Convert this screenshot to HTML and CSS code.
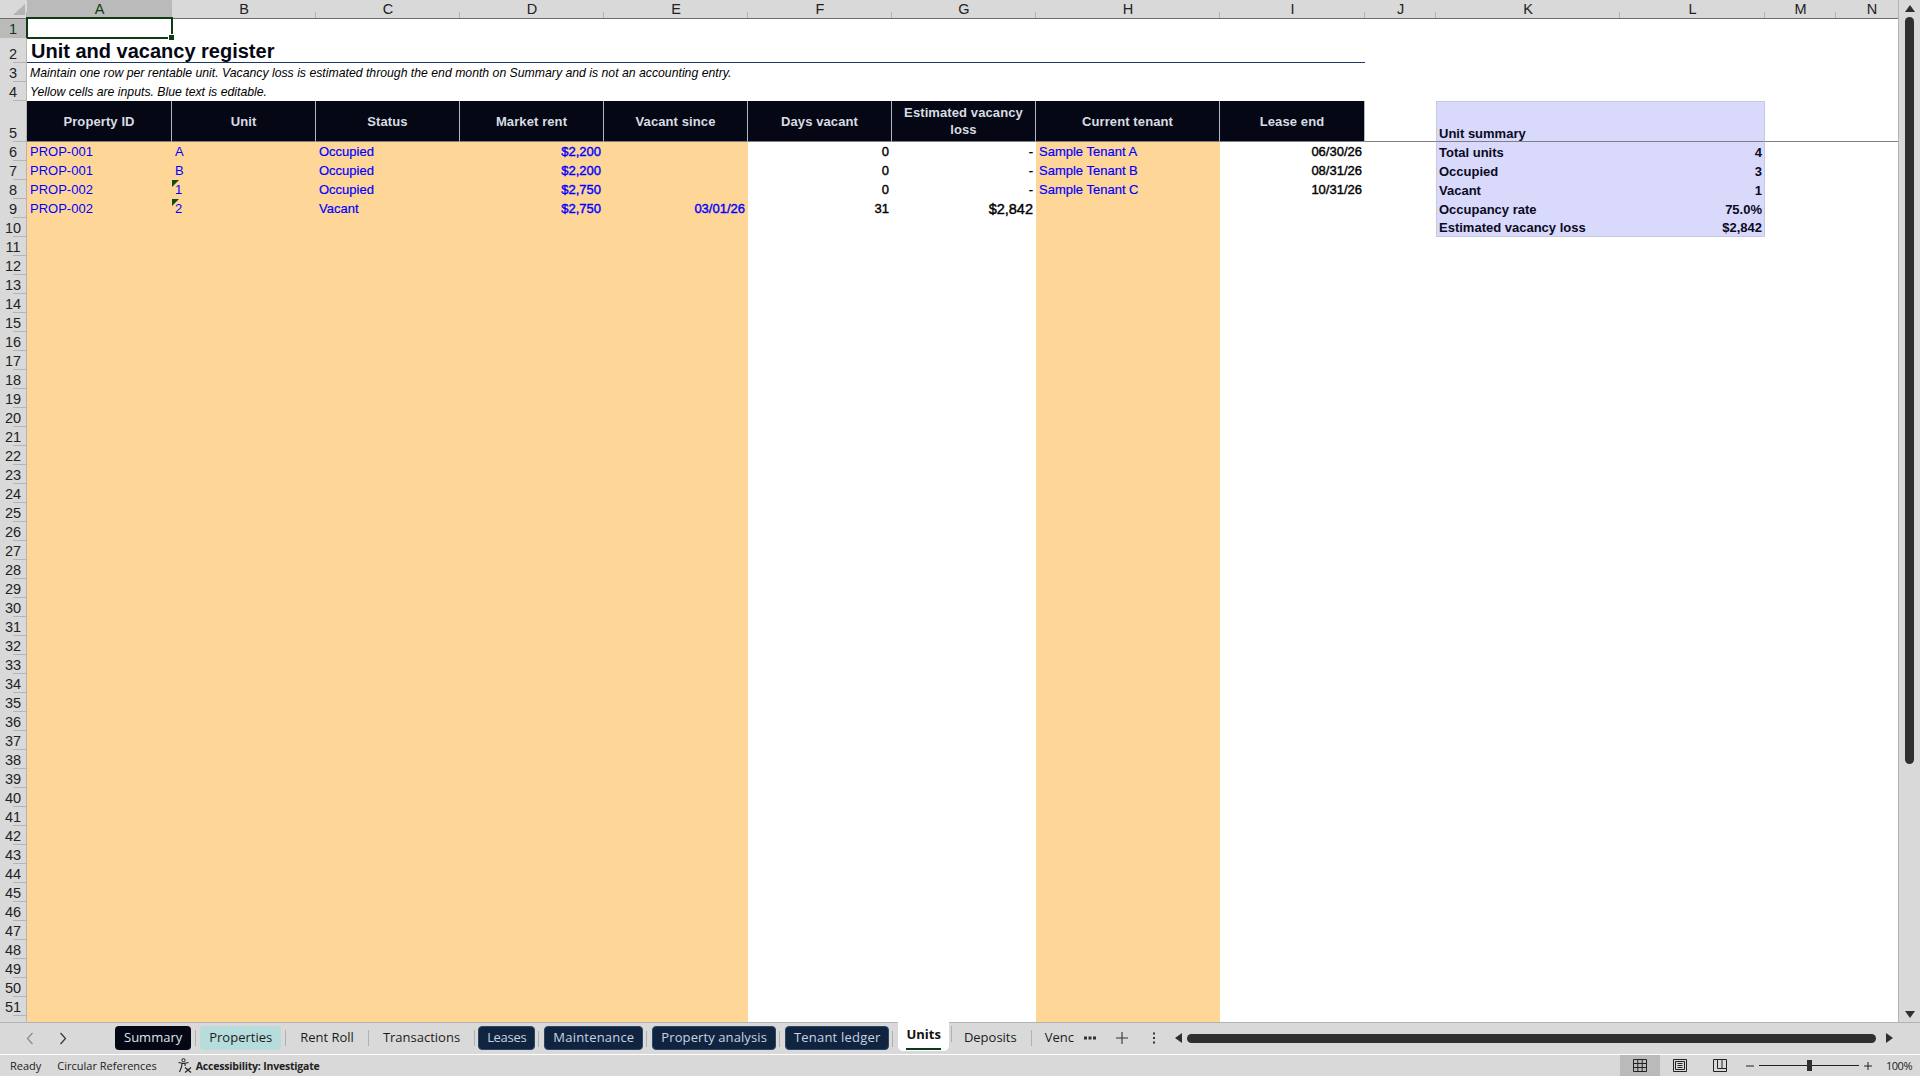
FILE: index.html
```html
<!DOCTYPE html>
<html lang="en">

<head>
    <meta charset="UTF-8">
    <title>Unit and vacancy register</title>
    <link rel="stylesheet" href="styles.css">
</head>

<body>
    <div class="workspace">
        <div class="sheet">
            <table class="grid">
                <colgroup>
                    <col class="c-rowhead">
                    <col class="c-a"><col class="c-std"><col class="c-std"><col class="c-std"><col class="c-std"><col class="c-std"><col class="c-std">
                    <col class="c-h"><col class="c-i"><col class="c-j"><col class="c-k"><col class="c-l"><col class="c-m"><col class="c-n">
                </colgroup>
                <tr class="letters">
                    <th class="corner"><svg width="12" height="11" viewBox="0 0 12 11"><path d="M12 0V11H0Z" fill="#b4b4b4"/></svg></th>
                    <th class="picked">A</th><th>B</th><th>C</th><th>D</th><th>E</th><th>F</th><th>G</th><th>H</th><th>I</th><th>J</th><th>K</th><th>L</th><th>M</th><th>N</th>
                </tr>
                <tr><th class="num picked">1</th><td class="active"><span class="cursor"></span></td><td colspan="13"></td></tr>
                <tr class="title-row"><th class="num">2</th><td class="title" colspan="9">Unit and vacancy register</td><td colspan="5"></td></tr>
                <tr><th class="num">3</th><td class="note" colspan="9">Maintain one row per rentable unit. Vacancy loss is estimated through the end month on Summary and is not an accounting entry.</td><td colspan="5"></td></tr>
                <tr><th class="num">4</th><td class="note" colspan="9">Yellow cells are inputs. Blue text is editable.</td><td colspan="5"></td></tr>
                <tr class="head-row">
                    <th class="num">5</th>
                    <td class="head">Property ID</td><td class="head">Unit</td><td class="head">Status</td><td class="head">Market rent</td><td class="head">Vacant since</td><td class="head">Days vacant</td><td class="head">Estimated vacancy loss</td><td class="head">Current tenant</td><td class="head">Lease end</td>
                    <td></td><td class="sum sum-top" colspan="2">Unit summary</td><td></td><td></td>
                </tr>
                <tr>
                    <th class="num">6</th>
                    <td class="input">PROP-001</td><td class="input">A</td><td class="input semi">Occupied</td><td class="input right strong">$2,200</td><td class="input right"></td>
                    <td class="right strong">0</td><td class="right strong">-</td><td class="input semi">Sample Tenant A</td><td class="right strong">06/30/26</td>
                    <td></td><td class="sum sum-l">Total units</td><td class="sum sum-r right">4</td><td colspan="2"></td>
                </tr>
                <tr>
                    <th class="num">7</th>
                    <td class="input">PROP-001</td><td class="input">B</td><td class="input semi">Occupied</td><td class="input right strong">$2,200</td><td class="input right"></td>
                    <td class="right strong">0</td><td class="right strong">-</td><td class="input semi">Sample Tenant B</td><td class="right strong">08/31/26</td>
                    <td></td><td class="sum sum-l">Occupied</td><td class="sum sum-r right">3</td><td colspan="2"></td>
                </tr>
                <tr>
                    <th class="num">8</th>
                    <td class="input">PROP-002</td><td class="input flagged">1</td><td class="input semi">Occupied</td><td class="input right strong">$2,750</td><td class="input right"></td>
                    <td class="right strong">0</td><td class="right strong">-</td><td class="input semi">Sample Tenant C</td><td class="right strong">10/31/26</td>
                    <td></td><td class="sum sum-l">Vacant</td><td class="sum sum-r right">1</td><td colspan="2"></td>
                </tr>
                <tr>
                    <th class="num">9</th>
                    <td class="input">PROP-002</td><td class="input flagged">2</td><td class="input semi">Vacant</td><td class="input right strong">$2,750</td><td class="input right strong">03/01/26</td>
                    <td class="right strong">31</td><td class="right strong big">$2,842</td><td class="input"></td><td></td>
                    <td></td><td class="sum sum-l">Occupancy rate</td><td class="sum sum-r right">75.0%</td><td colspan="2"></td>
                </tr>
                <tr>
                    <th class="num">10</th><td class="input" colspan="5"></td><td colspan="2"></td><td class="input"></td><td colspan="2"></td>
                    <td class="sum sum-l sum-end">Estimated vacancy loss</td><td class="sum sum-r sum-end right">$2,842</td><td colspan="2"></td>
                </tr>
                <tr><th class="num">11</th><td class="input" colspan="5"></td><td colspan="2"></td><td class="input"></td><td colspan="6"></td></tr>
                <tr><th class="num">12</th><td class="input" colspan="5"></td><td colspan="2"></td><td class="input"></td><td colspan="6"></td></tr>
                <tr><th class="num">13</th><td class="input" colspan="5"></td><td colspan="2"></td><td class="input"></td><td colspan="6"></td></tr>
                <tr><th class="num">14</th><td class="input" colspan="5"></td><td colspan="2"></td><td class="input"></td><td colspan="6"></td></tr>
                <tr><th class="num">15</th><td class="input" colspan="5"></td><td colspan="2"></td><td class="input"></td><td colspan="6"></td></tr>
                <tr><th class="num">16</th><td class="input" colspan="5"></td><td colspan="2"></td><td class="input"></td><td colspan="6"></td></tr>
                <tr><th class="num">17</th><td class="input" colspan="5"></td><td colspan="2"></td><td class="input"></td><td colspan="6"></td></tr>
                <tr><th class="num">18</th><td class="input" colspan="5"></td><td colspan="2"></td><td class="input"></td><td colspan="6"></td></tr>
                <tr><th class="num">19</th><td class="input" colspan="5"></td><td colspan="2"></td><td class="input"></td><td colspan="6"></td></tr>
                <tr><th class="num">20</th><td class="input" colspan="5"></td><td colspan="2"></td><td class="input"></td><td colspan="6"></td></tr>
                <tr><th class="num">21</th><td class="input" colspan="5"></td><td colspan="2"></td><td class="input"></td><td colspan="6"></td></tr>
                <tr><th class="num">22</th><td class="input" colspan="5"></td><td colspan="2"></td><td class="input"></td><td colspan="6"></td></tr>
                <tr><th class="num">23</th><td class="input" colspan="5"></td><td colspan="2"></td><td class="input"></td><td colspan="6"></td></tr>
                <tr><th class="num">24</th><td class="input" colspan="5"></td><td colspan="2"></td><td class="input"></td><td colspan="6"></td></tr>
                <tr><th class="num">25</th><td class="input" colspan="5"></td><td colspan="2"></td><td class="input"></td><td colspan="6"></td></tr>
                <tr><th class="num">26</th><td class="input" colspan="5"></td><td colspan="2"></td><td class="input"></td><td colspan="6"></td></tr>
                <tr><th class="num">27</th><td class="input" colspan="5"></td><td colspan="2"></td><td class="input"></td><td colspan="6"></td></tr>
                <tr><th class="num">28</th><td class="input" colspan="5"></td><td colspan="2"></td><td class="input"></td><td colspan="6"></td></tr>
                <tr><th class="num">29</th><td class="input" colspan="5"></td><td colspan="2"></td><td class="input"></td><td colspan="6"></td></tr>
                <tr><th class="num">30</th><td class="input" colspan="5"></td><td colspan="2"></td><td class="input"></td><td colspan="6"></td></tr>
                <tr><th class="num">31</th><td class="input" colspan="5"></td><td colspan="2"></td><td class="input"></td><td colspan="6"></td></tr>
                <tr><th class="num">32</th><td class="input" colspan="5"></td><td colspan="2"></td><td class="input"></td><td colspan="6"></td></tr>
                <tr><th class="num">33</th><td class="input" colspan="5"></td><td colspan="2"></td><td class="input"></td><td colspan="6"></td></tr>
                <tr><th class="num">34</th><td class="input" colspan="5"></td><td colspan="2"></td><td class="input"></td><td colspan="6"></td></tr>
                <tr><th class="num">35</th><td class="input" colspan="5"></td><td colspan="2"></td><td class="input"></td><td colspan="6"></td></tr>
                <tr><th class="num">36</th><td class="input" colspan="5"></td><td colspan="2"></td><td class="input"></td><td colspan="6"></td></tr>
                <tr><th class="num">37</th><td class="input" colspan="5"></td><td colspan="2"></td><td class="input"></td><td colspan="6"></td></tr>
                <tr><th class="num">38</th><td class="input" colspan="5"></td><td colspan="2"></td><td class="input"></td><td colspan="6"></td></tr>
                <tr><th class="num">39</th><td class="input" colspan="5"></td><td colspan="2"></td><td class="input"></td><td colspan="6"></td></tr>
                <tr><th class="num">40</th><td class="input" colspan="5"></td><td colspan="2"></td><td class="input"></td><td colspan="6"></td></tr>
                <tr><th class="num">41</th><td class="input" colspan="5"></td><td colspan="2"></td><td class="input"></td><td colspan="6"></td></tr>
                <tr><th class="num">42</th><td class="input" colspan="5"></td><td colspan="2"></td><td class="input"></td><td colspan="6"></td></tr>
                <tr><th class="num">43</th><td class="input" colspan="5"></td><td colspan="2"></td><td class="input"></td><td colspan="6"></td></tr>
                <tr><th class="num">44</th><td class="input" colspan="5"></td><td colspan="2"></td><td class="input"></td><td colspan="6"></td></tr>
                <tr><th class="num">45</th><td class="input" colspan="5"></td><td colspan="2"></td><td class="input"></td><td colspan="6"></td></tr>
                <tr><th class="num">46</th><td class="input" colspan="5"></td><td colspan="2"></td><td class="input"></td><td colspan="6"></td></tr>
                <tr><th class="num">47</th><td class="input" colspan="5"></td><td colspan="2"></td><td class="input"></td><td colspan="6"></td></tr>
                <tr><th class="num">48</th><td class="input" colspan="5"></td><td colspan="2"></td><td class="input"></td><td colspan="6"></td></tr>
                <tr><th class="num">49</th><td class="input" colspan="5"></td><td colspan="2"></td><td class="input"></td><td colspan="6"></td></tr>
                <tr><th class="num">50</th><td class="input" colspan="5"></td><td colspan="2"></td><td class="input"></td><td colspan="6"></td></tr>
                <tr><th class="num">51</th><td class="input" colspan="5"></td><td colspan="2"></td><td class="input"></td><td colspan="6"></td></tr>
                <tr class="last-row"><th class="num"></th><td class="input" colspan="5"></td><td colspan="2"></td><td class="input"></td><td colspan="6"></td></tr>
            </table>
        </div>
        <div class="vscroll">
            <svg class="arrow" width="10" height="7" viewBox="0 0 10 7"><path d="M5 0L10 7H0Z" fill="#2f2f2f"/></svg>
            <div class="vthumb"></div>
            <svg class="arrow arrow-end" width="10" height="7" viewBox="0 0 10 7"><path d="M0 0H10L5 7Z" fill="#2f2f2f"/></svg>
        </div>
    </div>

    <div class="tabbar">
        <div class="tab-nav">
            <svg width="8" height="13" viewBox="0 0 8 13"><path d="M6.5 1L1.5 6.5L6.5 12" fill="none" stroke="#8a8a8a" stroke-width="1.2"/></svg>
            <svg width="8" height="13" viewBox="0 0 8 13"><path d="M1.5 1L6.5 6.5L1.5 12" fill="none" stroke="#333" stroke-width="1.2"/></svg>
        </div>
        <div class="tabs">
            <div class="tab tab-black">Summary</div>
            <div class="tab tab-teal">Properties</div>
            <div class="tab tab-plain">Rent Roll</div>
            <div class="tab tab-plain tab-tight-end">Transactions</div>
            <div class="tab tab-navy tab-narrow">Leases</div>
            <div class="tab tab-navy tab-wide">Maintenance</div>
            <div class="tab tab-navy tab-spaced">Property analysis</div>
            <div class="tab tab-navy tab-wide">Tenant ledger</div>
            <div class="tab tab-current"><span class="tab-label">Units</span></div>
            <div class="tab tab-plain">Deposits</div>
            <div class="tab tab-cut">Venc</div>
        </div>
        <div class="tab-tools">
            <svg class="more" width="12" height="4" viewBox="0 0 12 4"><path d="M0 0.5H3V3.5H0ZM4.5 0.5H7.5V3.5H4.5ZM9 0.5H12V3.5H9Z" fill="#333"/></svg>
            <svg class="plus" width="12" height="12" viewBox="0 0 12 12"><path d="M6 0V12M0 6H12" stroke="#333" stroke-width="1.1"/></svg>
            <svg class="dots" width="4" height="12" viewBox="0 0 4 12"><path d="M1 0.5H3V2.5H1ZM1 5H3V7H1ZM1 9.5H3V11.5H1Z" fill="#333"/></svg>
        </div>
        <div class="hscroll">
            <svg width="7" height="10" viewBox="0 0 7 10"><path d="M7 0V10L0 5Z" fill="#2f2f2f"/></svg>
            <div class="hthumb"></div>
            <svg class="hend" width="7" height="10" viewBox="0 0 7 10"><path d="M0 0V10L7 5Z" fill="#2f2f2f"/></svg>
        </div>
    </div>

    <div class="statusbar">
        <span class="status-item">Ready</span>
        <span class="status-item">Circular References</span>
        <span class="status-a11y">
            <svg width="15" height="15" viewBox="0 0 15 15">
                <circle cx="6.5" cy="2.2" r="1.6" fill="none" stroke="#222"/>
                <path d="M1.5 4.5L6.5 5.5L11.5 4.5M5 5.5L4.5 9L2.5 14M8 5.5L8.2 8" fill="none" stroke="#222" stroke-width="1.1"/>
                <path d="M8 9.5L14 14.5M14 9.5L8 14.5" fill="none" stroke="#222" stroke-width="1.2"/>
            </svg>
            Accessibility: Investigate
        </span>
        <div class="status-right">
            <div class="views">
                <div class="view view-on">
                    <svg width="14" height="13" viewBox="0 0 14 13"><path d="M0.5 0.5H13.5V12.5H0.5ZM0.5 4.5H13.5M0.5 8.5H13.5M4.8 0.5V12.5M9.2 0.5V12.5" fill="none" stroke="#222"/></svg>
                </div>
                <div class="view">
                    <svg width="14" height="13" viewBox="0 0 14 13"><path d="M0.5 0.5H13.5V12.5H0.5ZM2.5 2.5H11.5V10.5H2.5ZM4.5 4.5H9.5M4.5 6.5H9.5M4.5 8.5H9.5" fill="none" stroke="#222"/></svg>
                </div>
                <div class="view">
                    <svg width="14" height="13" viewBox="0 0 14 13"><path d="M0.5 0.5H13.5V12.5H0.5ZM4.5 0.5V9.5H13.5M9 0.5V9.5" fill="none" stroke="#222"/></svg>
                </div>
            </div>
            <div class="zoom">
                <svg width="8" height="8" viewBox="0 0 8 8"><path d="M0 4H8" stroke="#222"/></svg>
                <div class="slider"><span class="slider-knob"></span></div>
                <svg width="8" height="8" viewBox="0 0 8 8"><path d="M0 4H8M4 0V8" stroke="#222"/></svg>
            </div>
            <span class="zoom-value">100%</span>
        </div>
    </div>
</body>

</html>
```

FILE: styles.css
```css
html,
body {
    margin: 0;
    padding: 0;
    height: 100%;
    overflow: hidden;
}

body {
    display: flex;
    flex-direction: column;
    width: 1920px;
    height: 1076px;
    font-family: "Liberation Sans", Arial, sans-serif;
    background-color: #d9d9d9;
    color: #111;
}

.workspace {
    display: flex;
    height: 1022px;
    flex-shrink: 0;
}

.sheet {
    width: 1898px;
    overflow: hidden;
    background-color: white;
}

.vscroll {
    flex: 1;
    display: flex;
    flex-direction: column;
    align-items: center;
    padding-top: 5px;
    border-left: 1px solid #b4b4b4;
}

.vthumb {
    width: 9px;
    height: 747px;
    margin-top: 5px;
    background-color: #2f2f2f;
    border-radius: 5px;
}

.arrow-end {
    margin-top: auto;
    margin-bottom: 4px;
}

/* the grid itself, column N runs on past the scrollbar */
.grid {
    table-layout: fixed;
    width: 1908px;
    border-spacing: 0;
    border-collapse: separate;
    font-size: 13px;
}

.c-rowhead { width: 27px; }
.c-a { width: 145px; }
.c-std { width: 144px; }
.c-h { width: 184px; }
.c-i { width: 145px; }
.c-j { width: 71px; }
.c-k { width: 184px; }
.c-l { width: 145px; }
.c-m { width: 71px; }
.c-n { width: 72px; }

.grid tr {
    height: 19px;
}

.grid th,
.grid td {
    padding: 0;
    white-space: nowrap;
    line-height: 18px;
    box-sizing: border-box;
}

.grid td {
    padding: 0 3px;
    color: black;
    vertical-align: bottom;
}

.letters th {
    position: relative;
    height: 19px;
    font-size: 14.5px;
    font-weight: normal;
    color: #222;
    background-color: #d9d9d9;
    border-bottom: 1px solid #6e6e6e;
}

.letters th::after {
    content: "";
    position: absolute;
    right: 0;
    bottom: 0;
    width: 1px;
    height: 6px;
    background-color: #b4b4b4;
}

.letters .corner svg {
    position: absolute;
    right: 2px;
    bottom: 3px;
}

.letters .picked,
.num.picked {
    background-color: #bababa;
    color: #0e3b14;
}

.num {
    position: relative;
    font-size: 14.5px;
    font-weight: normal;
    color: #222;
    text-align: center;
    vertical-align: bottom;
    background-color: #d9d9d9;
    border-right: 1px solid #b4b4b4;
}

.num::after {
    content: "";
    position: absolute;
    right: 0;
    bottom: 0;
    width: 13px;
    height: 1px;
    background-color: #b4b4b4;
}

.active {
    position: relative;
}

.cursor {
    position: absolute;
    left: -1px;
    right: -1px;
    top: -2px;
    bottom: -1px;
    border: 2px solid #0e3b14;
}

.cursor::after {
    content: "";
    position: absolute;
    right: -4px;
    bottom: -4px;
    width: 5px;
    height: 5px;
    background-color: #0e3b14;
    border: 1px solid white;
}

.grid .title-row {
    height: 25px;
}

.grid .title {
    font-size: 20px;
    font-weight: bold;
    color: #050814;
    padding-left: 4px;
    line-height: 22px;
    border-bottom: 1px solid #1f3864;
}

.grid .note {
    font-size: 12.25px;
    font-style: italic;
}

.grid .head-row {
    height: 41px;
}

.head-row td {
    border-bottom: 1px solid #7f7f7f;
}

.grid .head {
    background-color: #050814;
    color: #d8dde3;
    font-weight: bold;
    text-align: center;
    vertical-align: middle;
    white-space: normal;
    letter-spacing: 0.1px;
    line-height: 17px;
    padding: 0 10px;
    border-right: 1px solid #aeb8c2;
}

.grid .head:last-of-type {
    border-right: none;
}

.grid .input {
    background-color: #fed798;
    color: #0000ff;
}

.right {
    text-align: right;
}

.strong {
    -webkit-text-stroke: 0.4px currentColor;
}

.grid .big {
    font-size: 14.5px;
}

.semi {
    -webkit-text-stroke: 0.2px currentColor;
}

.flagged {
    position: relative;
}

.flagged::before {
    content: "";
    position: absolute;
    left: 0;
    top: 0;
    border-top: 7px solid #0e4a1c;
    border-right: 7px solid transparent;
}

/* summary block, K5:L10 */
.grid .sum {
    background-color: #d9d9fb;
    color: #0a0a1e;
    font-weight: bold;
    line-height: 16px;
}

.grid .sum-top {
    line-height: 14px;
    padding-left: 2px;
    border-left: 1px solid #c8c8dc;
    border-right: 1px solid #c8c8dc;
    border-top: 1px solid #c8c8dc;
}

.grid .sum-l {
    padding-left: 2px;
    border-left: 1px solid #c8c8dc;
}

.grid .sum-r {
    padding-right: 2px;
    border-right: 1px solid #c8c8dc;
}

.sum-end {
    border-bottom: 1px solid #c8c8dc;
}

/* sheet tabs */
.tabbar {
    display: flex;
    align-items: flex-start;
    height: 33px;
    flex-shrink: 0;
    box-sizing: border-box;
    border-top: 1px solid #b4b4b4;
    border-bottom: 1px solid white;
    font-family: "Open Sans", "Noto Sans", sans-serif;
    font-size: 13px;
}

.tab-nav {
    display: flex;
    gap: 25px;
    width: 115px;
    box-sizing: border-box;
    padding: 9px 0 0 26px;
}

.tabs {
    display: flex;
    align-items: flex-start;
    padding-top: 3px;
    width: 969px;
}

.tab {
    position: relative;
    height: 24px;
    line-height: 23px;
    padding: 0 9px;
    margin-right: 9px;
    box-sizing: border-box;
    border-radius: 4px;
    white-space: nowrap;
    color: #1c1c1c;
}

.tab::after {
    content: "";
    position: absolute;
    right: -5px;
    top: 4px;
    width: 1px;
    height: 16px;
    background-color: #b0b0b0;
}

.tab-black {
    background-color: #050814;
    color: #dde3ea;
}

.tab-teal {
    background-color: #b7dcdc;
}

.tab-plain {
    padding: 0 10px;
}

.tab-tight-end {
    margin-right: 8px;
}

.tab-navy {
    padding: 0 8px;
    background-color: #10243f;
    color: #c6d3e2;
    border: 1px solid #2d4566;
    line-height: 21px;
}

.tab-narrow {
    letter-spacing: -0.3px;
}

.tab-wide {
    letter-spacing: 0.2px;
}

.tab-spaced {
    letter-spacing: 0.1px;
}

.tab-current {
    height: 29px;
    margin-top: -4px;
    margin-right: 5px;
    padding: 0 8px;
    background-color: white;
    border-radius: 0 0 5px 5px;
    font-weight: bold;
    color: #111;
}

.tab-current::after {
    right: -3px;
}

.tab-label {
    display: block;
    height: 26px;
    line-height: 25px;
    border-bottom: 2px solid #0e3b14;
}

.tab-cut {
    margin-right: 0;
}

.tab-cut::after {
    display: none;
}

.tab-tools {
    display: flex;
    align-items: center;
    height: 30px;
    width: 91px;
}

.plus {
    margin-left: 20px;
}

.dots {
    margin-left: 24px;
}

.hscroll {
    flex: 1;
    display: flex;
    align-items: center;
    height: 30px;
    gap: 5px;
    padding-right: 27px;
}

.hthumb {
    flex: 1;
    height: 9px;
    background-color: #2f2f2f;
    border-radius: 5px;
}

.hend {
    margin-left: 5px;
}

/* status bar */
.statusbar {
    flex: 1;
    display: flex;
    align-items: center;
    padding-left: 10px;
    font-family: "Open Sans", "Noto Sans", sans-serif;
    font-size: 11px;
    color: #222;
}

.status-item {
    margin-right: 16px;
}

.status-a11y {
    display: flex;
    align-items: center;
    gap: 4px;
    margin-left: 4px;
    font-size: 10.5px;
    letter-spacing: -0.2px;
    font-weight: bold;
}

.status-right {
    margin-left: auto;
    display: flex;
    align-items: center;
    height: 100%;
}

.views {
    display: flex;
    height: 100%;
}

.view {
    width: 40px;
    display: flex;
    align-items: center;
    justify-content: center;
}

.view-on {
    background-color: #bababa;
}

.zoom {
    display: flex;
    align-items: center;
    gap: 5px;
    margin-left: 6px;
}

.slider {
    position: relative;
    width: 100px;
    height: 1px;
    background-color: #222;
}

.slider-knob {
    position: absolute;
    left: 48px;
    top: -5px;
    width: 5px;
    height: 11px;
    background-color: #2f2f2f;
}

.zoom-value {
    margin-left: 14px;
    margin-right: 8px;
    letter-spacing: -0.5px;
}
```
